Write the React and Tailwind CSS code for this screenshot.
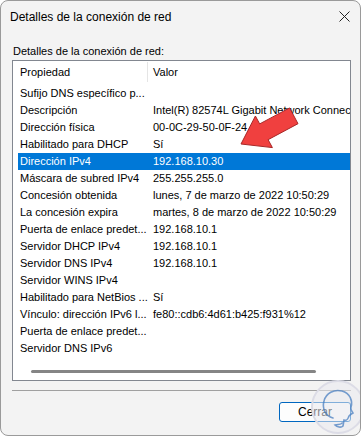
import React from "react";

const rows = [
  ["Sufijo DNS específico p...", ""],
  ["Descripción", "Intel(R) 82574L Gigabit Network Connection"],
  ["Dirección física", "00-0C-29-50-0F-24"],
  ["Habilitado para DHCP", "Sí"],
  ["Dirección IPv4", "192.168.10.30"],
  ["Máscara de subred IPv4", "255.255.255.0"],
  ["Concesión obtenida", "lunes, 7 de marzo de 2022 10:50:29"],
  ["La concesión expira", "martes, 8 de marzo de 2022 10:50:29"],
  ["Puerta de enlace predet...", "192.168.10.1"],
  ["Servidor DHCP IPv4", "192.168.10.1"],
  ["Servidor DNS IPv4", "192.168.10.1"],
  ["Servidor WINS IPv4", ""],
  ["Habilitado para NetBios ...", "Sí"],
  ["Vínculo: dirección IPv6 l...", "fe80::cdb6:4d61:b425:f931%12"],
  ["Puerta de enlace predet...", ""],
  ["Servidor DNS IPv6", ""],
];

export default function App() {
  return (
    <div className="w-[362px] h-[438px] bg-white font-['Liberation_Sans',Arial,sans-serif] text-black">
      <div className="relative w-[361px] h-[436px] bg-[#f3f3f3] border border-[#9a9a9a] rounded-[8px] overflow-hidden flex flex-col">
        {/* Title bar */}
        <div className="h-[31px] flex items-center justify-between pl-[9px] pr-[10px] shrink-0">
          <span className="text-[12px] leading-none pt-[1px]">Detalles de la conexión de red</span>
          <svg width="11" height="11" viewBox="0 0 11 11">
            <path d="M0.5 0.5 L10.5 10.5 M10.5 0.5 L0.5 10.5" stroke="#222" strokeWidth="1" fill="none" />
          </svg>
        </div>
        {/* Body */}
        <div className="px-[11px] pt-[12px] flex flex-col">
          <div className="text-[11px] leading-[14px] h-[16px] pl-[1px]">Detalles de la conexión de red:</div>
          <div className="relative w-[339px] h-[321px] bg-white border border-[#828790] overflow-hidden text-[11px] leading-none">
            {/* header */}
            <div className="h-[22px] flex items-center">
              <div className="w-[134px] pl-[7px] h-full flex items-center">Propiedad</div>
              <div className="w-px h-[20px] bg-[#e5e5e5]" />
              <div className="pl-[5px]">Valor</div>
            </div>
            <div className="pt-[2px] pl-[5px]">
              {rows.map(([k, v], i) => {
                const sel = i === 4;
                return (
                  <div
                    key={i}
                    className={`h-[17px] flex items-center whitespace-nowrap w-[400px] ${sel ? "bg-[#0078d7] text-white" : ""}`}
                  >
                    <div className="w-[129px] pl-[2px] shrink-0">{k}</div>
                    <div className="pl-[6px] shrink-0">{v}</div>
                  </div>
                );
              })}
            </div>
            {/* horizontal scrollbar */}
            <div className="absolute left-[18px] top-[309px] w-[285px] h-[3px] rounded-full bg-[#858585]" />
            {/* red arrow */}
            <svg className="absolute left-0 top-0" width="339" height="321" viewBox="12 60 339 321">
              <polygon
                points="240,143 271.4,146.6 267.1,138.7 297,122.7 288.6,106.9 258.7,122.9 254.4,115"
                fill="#f0403f"
                stroke="#a82828"
                strokeWidth="1"
                strokeLinejoin="round"
              />
            </svg>
          </div>
          <div className="mt-[9px] h-px w-[339px] bg-[#a0a0a0]" />
          <div className="mt-[11px] flex justify-end w-[339px]">
            <button className="w-[72px] h-[20px] rounded-[3px] border border-[#0067c0] bg-[#fdfdfd] text-[12px] leading-none font-['Liberation_Sans',Arial,sans-serif]">
              Cerrar
            </button>
          </div>
        </div>
        {/* watermark */}
        <svg className="absolute left-[310px] top-[379px]" width="52" height="57" viewBox="0 0 52 57">
          <circle cx="27" cy="27" r="26" fill="#e9e9ef" fillOpacity="0.55" stroke="#dcdce6" strokeWidth="2" />
          <path
            d="M22 38 C14 36 11 28 13 21 C15 13 23 9 31 11 C39 13 42 21 40 27 C39 30 41 31 42 33 C40 34 39 35 38 36 C37 39 36 41 33 40 L32 46 C30 48 26 47 24 45 C27 44 30 45 31 43"
            fill="none"
            stroke="#4a7fc0"
            strokeOpacity="0.75"
            strokeWidth="1.6"
            strokeLinecap="round"
          />
        </svg>
      </div>
    </div>
  );
}
